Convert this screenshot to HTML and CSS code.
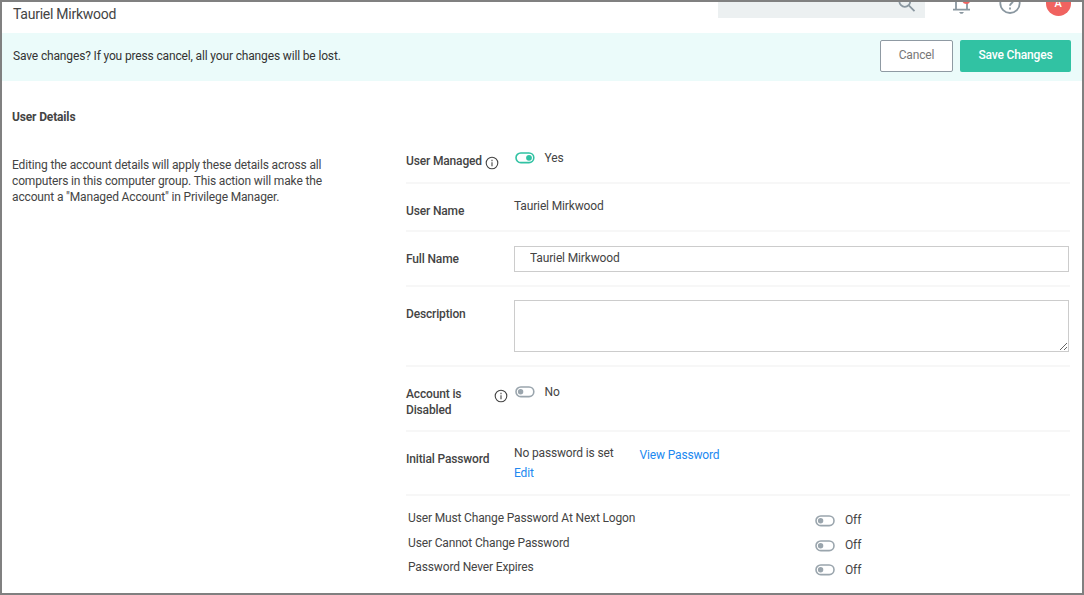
FILE: index.html
```html
<!DOCTYPE html>
<html lang="en">
<head>
<meta charset="utf-8">
<title>User Details</title>
<link rel="stylesheet" href="styles.css">
</head>
<body>
<div class="window">
  <header class="header">
    <h1 class="title">Tauriel Mirkwood</h1>
    <div class="search">
      <svg class="search-icon" width="20" height="16" viewBox="896 2 20 16"><circle cx="904.8" cy="1.400" r="5.400"/><path d="M908.500 5.200l6 6"/></svg>
    </div>
    <svg class="bell" width="20" height="16" viewBox="951 2 20 16"><path d="M956 9V0M967 9V0M953 9.6H970"/><path class="clapper" d="M959 12h5l-1.5 1.8h-2z"/><circle class="dot" cx="966.3" cy="0" r="4"/></svg>
    <svg class="help" width="22" height="16" viewBox="998.5 2 22 16"><circle cx="1009.5" cy="3.3" r="9.7"/><path d="M1006.5 1a3 3 0 0 1 6 0c0 2.300-3 2.300-3 4.800M1009.500 7.500v2"/></svg>
    <div class="avatar"><span>A</span></div>
  </header>

  <section class="save-bar">
    <p class="save-text">Save changes? If you press cancel, all your changes will be lost.</p>
    <button class="btn cancel">Cancel</button>
    <button class="btn save">Save Changes</button>
  </section>

  <main class="content">
    <aside class="intro">
      <h2 class="intro-title">User Details</h2>
      <p class="intro-text">Editing the account details will apply these details across all<br>computers in this computer group. This action will make the<br>account a "Managed Account" in Privilege Manager.</p>
    </aside>
    <div class="form">
      <div class="row managed">
        <div class="label">User Managed
          <svg class="info" width="14" height="14" viewBox="0 0 14 14"><circle cx="7" cy="7" r="5.800"/><path d="M7 6.200v4M7 3.800v1.400"/></svg>
        </div>
        <div class="value switch-value"><svg class="toggle on" width="20" height="12" viewBox="0 0 20 12"><rect x="1" y="1" width="17.800" height="9.600" rx="4.800"/><circle cx="14" cy="5.800" r="2.900"/></svg>Yes</div>
      </div>
      <div class="row username">
        <div class="label">User Name</div>
        <div class="value">Tauriel Mirkwood</div>
      </div>
      <div class="row fullname">
        <div class="label">Full Name</div>
        <input class="input" type="text" value="Tauriel Mirkwood">
      </div>
      <div class="row description">
        <div class="label">Description</div>
        <textarea class="input area"></textarea>
      </div>
      <div class="row disabled">
        <div class="label"><span>Account is<br>Disabled</span>
          <svg class="info" width="14" height="14" viewBox="0 0 14 14"><circle cx="7" cy="7" r="5.800"/><path d="M7 6.200v4M7 3.800v1.400"/></svg>
        </div>
        <div class="value switch-value"><svg class="toggle" width="20" height="12" viewBox="0 0 20 12"><rect x="1" y="1" width="17.800" height="9.600" rx="4.800"/><circle cx="5.600" cy="5.800" r="2.700"/></svg>No</div>
      </div>
      <div class="row password">
        <div class="label">Initial Password</div>
        <div class="value password-value">
          <div class="password-state">No password is set<br><a class="link">Edit</a></div>
          <a class="link view">View Password</a>
        </div>
      </div>
      <div class="options">
        <div class="option"><span class="option-name">User Must Change Password At Next Logon</span><svg class="toggle" width="20" height="12" viewBox="0 0 20 12"><rect x="1" y="1" width="18" height="9.600" rx="4.800"/><circle cx="5.600" cy="5.800" r="2.700"/></svg><span class="option-state">Off</span></div>
        <div class="option"><span class="option-name">User Cannot Change Password</span><svg class="toggle" width="20" height="12" viewBox="0 0 20 12"><rect x="1" y="1" width="18" height="9.600" rx="4.800"/><circle cx="5.600" cy="5.800" r="2.700"/></svg><span class="option-state">Off</span></div>
        <div class="option last"><span class="option-name">Password Never Expires</span><svg class="toggle" width="20" height="12" viewBox="0 0 20 12"><rect x="1" y="1" width="18" height="9.600" rx="4.800"/><circle cx="5.600" cy="5.800" r="2.700"/></svg><span class="option-state">Off</span></div>
      </div>
    </div>
  </main>
</div>
</body>
</html>
```
FILE: styles.css
```css
* { box-sizing: border-box; }
body {
  margin: 0;
  font: 12px/16px Roboto, "Liberation Sans", sans-serif;
  letter-spacing: -.15px;
  color: #444;
  background: #fff;
}
h1, h2, p { margin: 0; }
.window {
  width: 1084px;
  height: 595px;
  border: 2px solid #808080;
  overflow: hidden;
}

/* Header */
.header {
  display: flex;
  align-items: flex-start;
  height: 31px;
  padding-left: 11px;
}
.title {
  flex: none;
  width: 705px;
  padding-top: 3px;
  font-size: 14px;
  line-height: 18px;
  font-weight: 400;
  letter-spacing: -.25px;
}
.search {
  display: flex;
  justify-content: flex-end;
  width: 207px;
  height: 16px;
  padding-right: 9px;
  background: #ecf0f1;
}
.header svg { flex: none; fill: none; stroke: #8a97a0; stroke-width: 1.8; }
.bell { margin-left: 26px; }
.header .bell .clapper { fill: #8a97a0; stroke: none; }
.header .bell .dot { fill: #f06360; stroke: none; }
.help { margin-left: 27.500px; }
.avatar {
  flex: none;
  width: 25px;
  height: 14px;
  margin-left: 25px;
  border-radius: 0 0 12.500px 12.500px;
  background: #f06360;
  color: #fff;
  font-size: 11px;
  font-weight: 500;
  line-height: 3px;
  text-align: center;
}

/* Pending changes */
.save-bar {
  display: flex;
  height: 48px;
  padding: 7px 11px 0;
  background: #ebfbfa;
}
.save-text { flex: 1; padding-top: 8px; color: #333; }
.btn {
  height: 32px;
  padding: 0 0 2px;
  border-radius: 2px;
  font: inherit;
  letter-spacing: inherit;
}
.cancel { width: 73px; border: 1px solid #8f9aa3; background: #fff; color: #777; }
.save { width: 111px; margin-left: 7px; border: 0; background: #31c2a3; color: #fff; font-weight: 500; }

/* Body */
.content { display: grid; grid-template-columns: 394px 664px; padding-left: 10px; }
.intro { padding-top: 28px; }
.intro-title { font-size: 12px; line-height: 16px; font-weight: 700; }
.intro-text { margin-top: 32px; }
.form { padding-top: 55px; }
.row {
  display: grid;
  grid-template-columns: 108px 1fr;
  align-items: start;
  border-bottom: 2px solid #f7f7f7;
}
.label { display: flex; font-weight: 500; }
.info { flex: none; fill: none; stroke: #444; stroke-width: 1.1; }
.managed { height: 48px; }
.managed .label { padding-top: 17px; }
.managed .info { margin: 2.500px 0 0 3.500px; }
.managed .value { padding-top: 14px; }
.username { height: 48px; }
.username .label { padding-top: 19px; }
.username .value { padding-top: 14px; }
.fullname { height: 55px; }
.fullname .label { padding-top: 19px; }
.input {
  display: block;
  width: 555px;
  height: 26px;
  margin: 14px 0 0;
  padding: 0 15px 2px;
  border: 1px solid #ccc;
  border-radius: 0;
  outline: 0;
  font: inherit;
  letter-spacing: inherit;
  color: inherit;
  background: #fff;
}
.description { height: 80px; }
.description .label { padding-top: 19px; }
.area { height: 52px; margin-top: 13px; }
.disabled { height: 65px; }
.disabled .label { justify-content: space-between; padding: 19px 6px 0 0; }
.disabled .info { margin-top: 2.500px; }
.disabled .value { padding-top: 17px; }
.password { height: 64px; }
.password .label { padding-top: 19px; }
.password-value { display: flex; padding-top: 11px; line-height: 20px; }
.password-state { width: 125.500px; }
.link { color: #2188f0; }
.view { padding-top: 2px; }

.switch-value { display: flex; }
.toggle { flex: none; fill: none; stroke: #9aa5ad; stroke-width: 1.6; }
.toggle circle { fill: #9aa5ad; stroke: none; }
.toggle.on { stroke: #31c2a3; }
.toggle.on circle { fill: #31c2a3; }
.switch-value .toggle { margin: 2px 9.500px 0 1px; }

.options { padding: 14px 0 0 2px; }
.option { display: flex; height: 24.600px; }
.option-name { width: 407px; }
.option .toggle { margin-top: 5px; }
.option-state { padding: 2px 0 0 10px; }
.last .option-state { padding-top: 3px; }
```
